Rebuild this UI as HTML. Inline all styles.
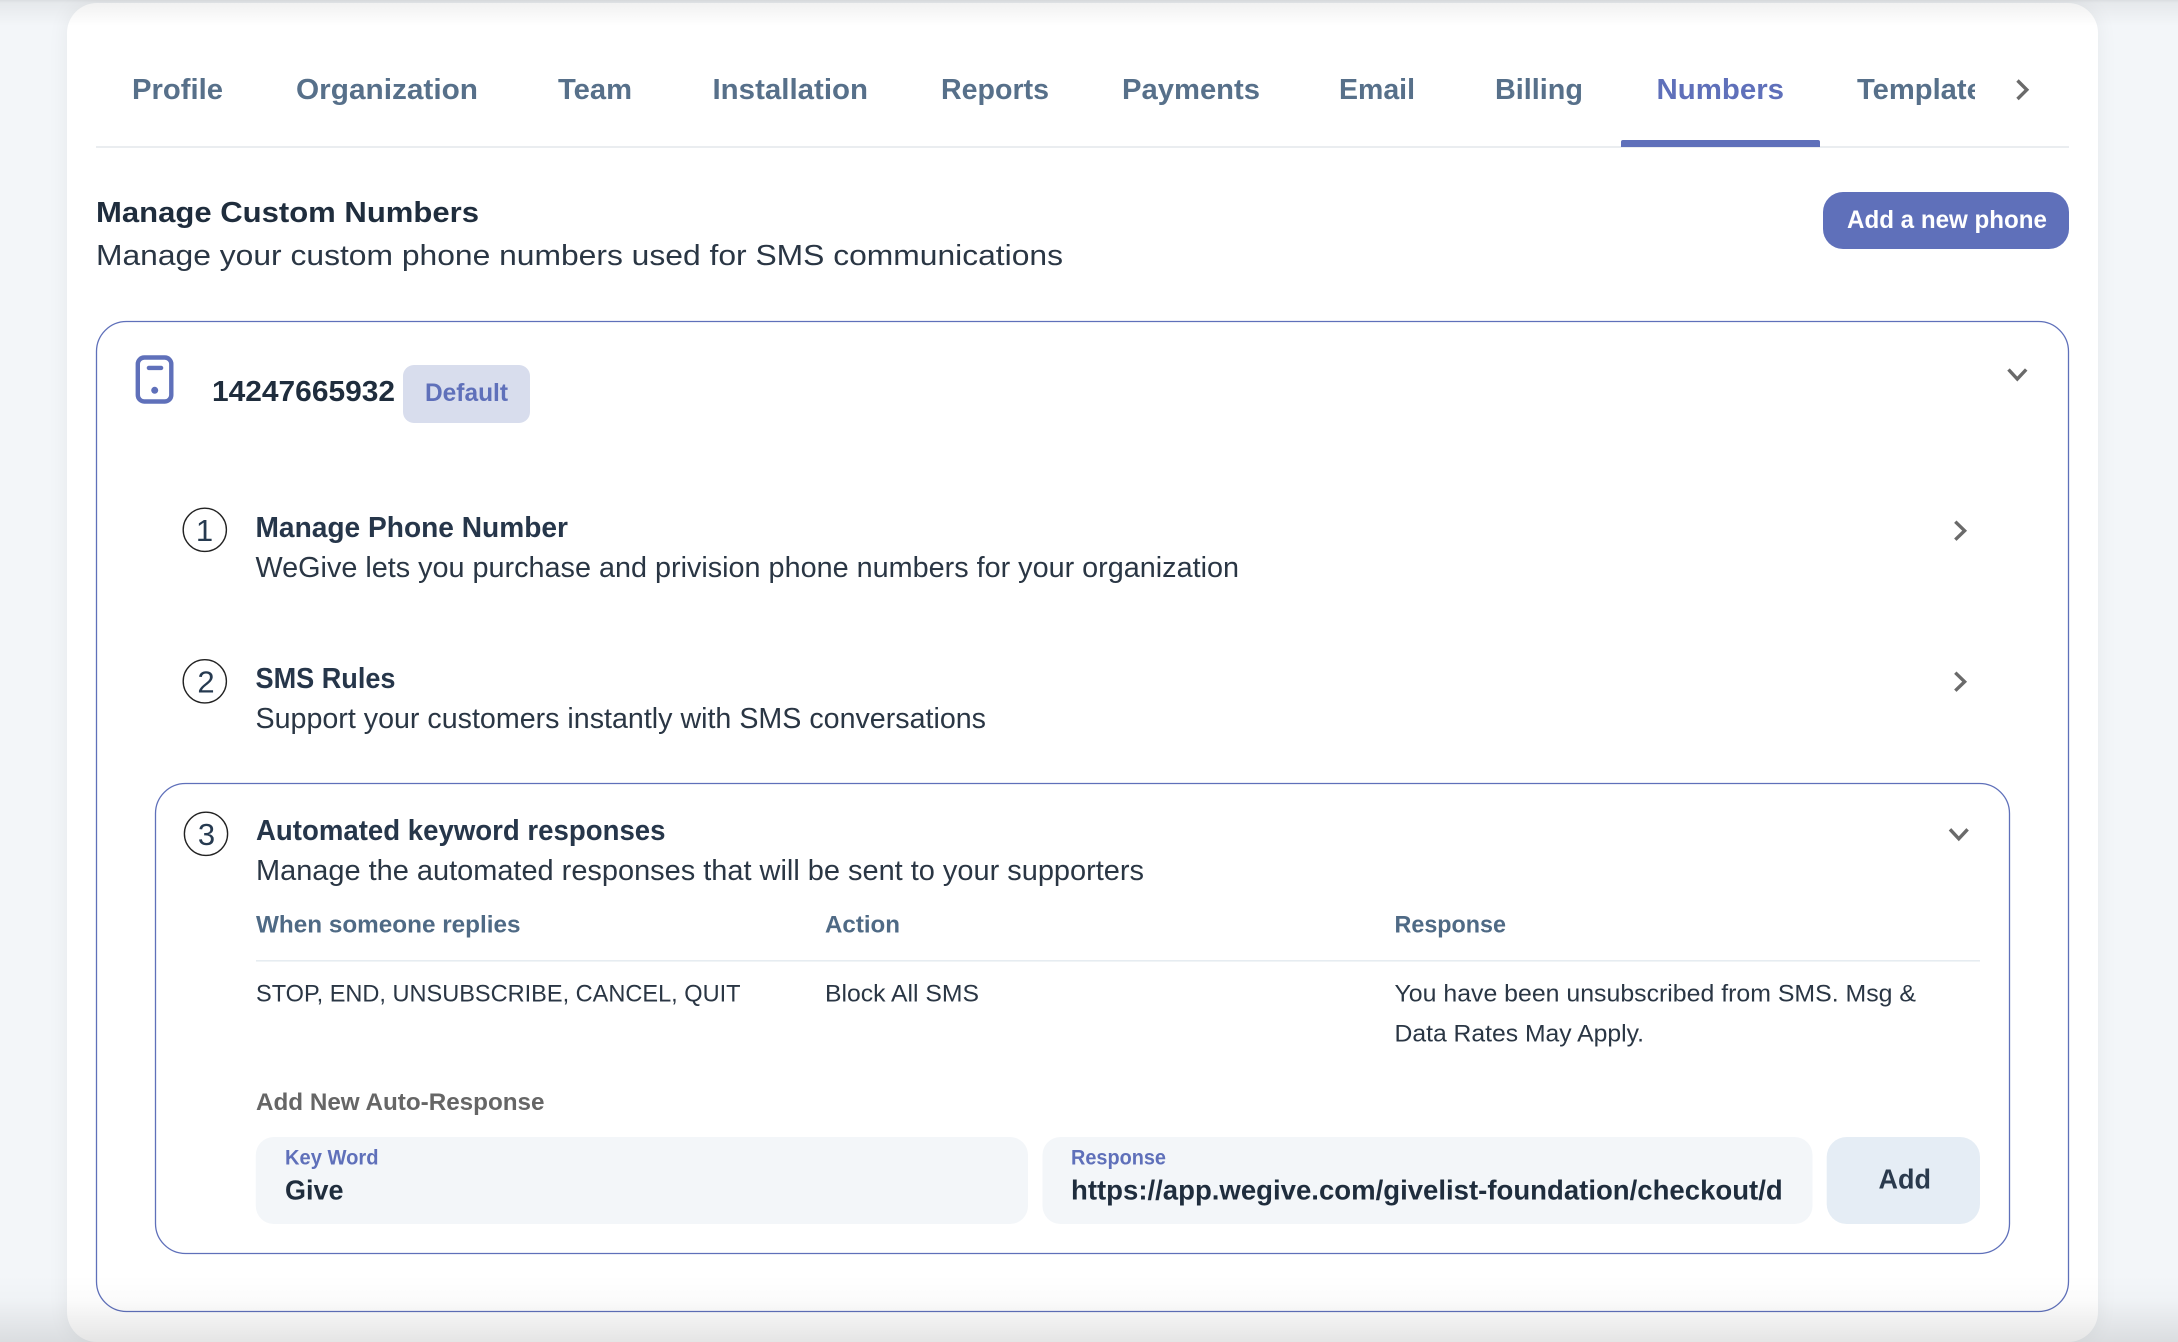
<!DOCTYPE html>
<html lang="en">
<head>
<meta charset="utf-8">
<title>Manage Custom Numbers</title>
<style>
html,body{margin:0;padding:0;width:2178px;height:1342px;overflow:hidden;background:#f3f6f9;}
body{position:relative;font-family:"Liberation Sans",sans-serif;}
.card{position:absolute;left:67px;top:3px;width:2031px;height:1338.5px;background:#fff;border-radius:30px;box-shadow:0 0 22px rgba(0,0,0,.06);}
.ov-top{position:absolute;left:0;top:0;width:2178px;height:26px;background:linear-gradient(to bottom,rgba(0,0,0,.1) 0,rgba(0,0,0,.055) 3px,rgba(0,0,0,0) 26px);}
.ov-bot{position:absolute;left:0;top:1275px;width:2178px;height:67px;background:linear-gradient(to bottom,rgba(0,0,0,0) 0,rgba(0,0,0,.015) 25px,rgba(0,0,0,.1) 100%);}
svg{position:absolute;left:0;top:0;}
text{font-family:"Liberation Sans",sans-serif;}
.tab{font-size:29px;font-weight:700;fill:#57708a;}
.h{font-size:29px;font-weight:700;fill:#1f2d3d;}
.h2{font-size:28.5px;font-weight:700;fill:#26364a;}
.p{font-size:29px;fill:#2a3644;}
.th{font-size:24.5px;font-weight:700;fill:#4f6a85;}
.td{font-size:24.5px;fill:#2a3644;}
.lbl{font-size:21px;font-weight:700;fill:#5f70ba;}
.val{font-size:27.5px;font-weight:700;fill:#1f2d3d;}
.num{font-size:31px;fill:#263a50;}
.chev{fill:none;stroke:#6a6a6a;stroke-width:3.4;stroke-linejoin:miter;}
</style>
</head>
<body>
<div class="card"></div>
<svg width="2178" height="1342" viewBox="0 0 2178 1342" xmlns="http://www.w3.org/2000/svg">
<defs><clipPath id="tabclip"><rect x="1850" y="60" width="125" height="60"/></clipPath></defs>

<!-- tabs -->
<text class="tab" x="132" y="99" textLength="91" lengthAdjust="spacingAndGlyphs">Profile</text>
<text class="tab" x="296" y="99" textLength="182" lengthAdjust="spacingAndGlyphs">Organization</text>
<text class="tab" x="558" y="99" textLength="74" lengthAdjust="spacingAndGlyphs">Team</text>
<text class="tab" x="712.5" y="99" textLength="155.5" lengthAdjust="spacingAndGlyphs">Installation</text>
<text class="tab" x="941" y="99" textLength="108" lengthAdjust="spacingAndGlyphs">Reports</text>
<text class="tab" x="1122" y="99" textLength="138" lengthAdjust="spacingAndGlyphs">Payments</text>
<text class="tab" x="1339" y="99" textLength="76" lengthAdjust="spacingAndGlyphs">Email</text>
<text class="tab" x="1495" y="99" textLength="88" lengthAdjust="spacingAndGlyphs">Billing</text>
<text class="tab" x="1656.5" y="99" textLength="127.5" lengthAdjust="spacingAndGlyphs" style="fill:#5f70ba">Numbers</text>
<g clip-path="url(#tabclip)"><text class="tab" x="1857" y="99" textLength="142" lengthAdjust="spacingAndGlyphs">Templates</text></g>
<path class="chev" d="M2017.5 80.5 L2026.8 89.8 L2017.5 99"/>
<rect x="96" y="146" width="1973" height="2" fill="#eaedf0"/>
<path d="M1621 147 V142 Q1621 140 1623 140 H1818 Q1820 140 1820 142 V147 Z" fill="#5f70ba"/>

<!-- heading -->
<text class="h" x="96" y="222" textLength="383" lengthAdjust="spacingAndGlyphs">Manage Custom Numbers</text>
<text class="p" x="96" y="265" textLength="967" lengthAdjust="spacingAndGlyphs">Manage your custom phone numbers used for SMS communications</text>
<rect x="1823" y="192" width="246" height="57" rx="20" fill="#5f70ba"/>
<text x="1847" y="228" font-size="25" font-weight="700" fill="#fff" textLength="200" lengthAdjust="spacingAndGlyphs">Add a new phone</text>

<!-- outer box -->
<rect x="96.5" y="321.5" width="1972" height="990" rx="30" fill="none" stroke="#5f70ba" stroke-width="1.3"/>
<rect x="137.8" y="357.5" width="33.5" height="44" rx="6.5" fill="none" stroke="#5f70ba" stroke-width="4.4"/>
<rect x="146.7" y="365.7" width="16.6" height="4.4" rx="2.2" fill="#5f70ba"/>
<circle cx="154.7" cy="390.3" r="3.5" fill="#5f70ba"/>
<text class="h" x="212" y="401" textLength="183" lengthAdjust="spacingAndGlyphs">14247665932</text>
<rect x="403" y="365" width="127" height="58" rx="11" fill="#d8dded"/>
<text x="425" y="401" font-size="25" font-weight="700" fill="#5f70ba" textLength="83" lengthAdjust="spacingAndGlyphs">Default</text>
<path class="chev" d="M2008.5 369.5 L2017.3 379 L2026.2 369.5"/>

<!-- item 1 -->
<circle cx="204.8" cy="529.8" r="21.6" fill="none" stroke="#222" stroke-width="1.4"/>
<text class="num" x="204.5" y="541" text-anchor="middle">1</text>
<text class="h2" x="255.5" y="537" textLength="312.5" lengthAdjust="spacingAndGlyphs">Manage Phone Number</text>
<text class="p" x="255.5" y="577" textLength="983.5" lengthAdjust="spacingAndGlyphs">WeGive lets you purchase and privision phone numbers for your organization</text>
<path class="chev" d="M1955.3 521.7 L1964.6 530.7 L1955.3 539.7"/>

<!-- item 2 -->
<circle cx="204.8" cy="681.3" r="21.6" fill="none" stroke="#222" stroke-width="1.4"/>
<text class="num" x="206" y="692.5" text-anchor="middle">2</text>
<text class="h2" x="255.5" y="688" textLength="140" lengthAdjust="spacingAndGlyphs">SMS Rules</text>
<text class="p" x="255.5" y="728" textLength="730.5" lengthAdjust="spacingAndGlyphs">Support your customers instantly with SMS conversations</text>
<path class="chev" d="M1955.3 672.7 L1964.6 681.7 L1955.3 690.7"/>

<!-- item 3 box -->
<rect x="155.5" y="783.5" width="1854" height="470" rx="30" fill="none" stroke="#5f70ba" stroke-width="1.3"/>
<circle cx="206" cy="833.8" r="21.6" fill="none" stroke="#222" stroke-width="1.4"/>
<text class="num" x="206.5" y="845" text-anchor="middle">3</text>
<text class="h2" x="256" y="840" textLength="409.5" lengthAdjust="spacingAndGlyphs">Automated keyword responses</text>
<text class="p" x="256" y="880" textLength="888" lengthAdjust="spacingAndGlyphs">Manage the automated responses that will be sent to your supporters</text>
<path class="chev" d="M1950 829.3 L1958.8 838.8 L1967.6 829.3"/>

<!-- table -->
<text class="th" x="256" y="932.7" textLength="264.5" lengthAdjust="spacingAndGlyphs">When someone replies</text>
<text class="th" x="825" y="932.7" textLength="75" lengthAdjust="spacingAndGlyphs">Action</text>
<text class="th" x="1394.5" y="932.7" textLength="111.5" lengthAdjust="spacingAndGlyphs">Response</text>
<rect x="256" y="960" width="1724" height="1.6" fill="#e6ecf1"/>
<text class="td" x="256" y="1001.7" textLength="484.5" lengthAdjust="spacingAndGlyphs">STOP, END, UNSUBSCRIBE, CANCEL, QUIT</text>
<text class="td" x="825" y="1001.7" textLength="154" lengthAdjust="spacingAndGlyphs">Block All SMS</text>
<text class="td" x="1394.5" y="1001.7" textLength="521.5" lengthAdjust="spacingAndGlyphs">You have been unsubscribed from SMS. Msg &amp;</text>
<text class="td" x="1394.5" y="1041.7" textLength="249.5" lengthAdjust="spacingAndGlyphs">Data Rates May Apply.</text>

<!-- add new -->
<text x="256" y="1110" font-size="24.5" font-weight="700" fill="#666" textLength="288.5" lengthAdjust="spacingAndGlyphs">Add New Auto-Response</text>
<rect x="255.8" y="1137" width="772.2" height="87" rx="18" fill="#f3f6f9"/>
<text class="lbl" x="285" y="1164.7" textLength="93.5" lengthAdjust="spacingAndGlyphs">Key Word</text>
<text class="val" x="285" y="1199.3" textLength="58.5" lengthAdjust="spacingAndGlyphs">Give</text>
<rect x="1042.5" y="1137" width="770" height="87" rx="18" fill="#f3f6f9"/>
<text class="lbl" x="1071" y="1164.7" textLength="95" lengthAdjust="spacingAndGlyphs">Response</text>
<text class="val" x="1071" y="1199.3" textLength="711.7" lengthAdjust="spacingAndGlyphs">https://app.wegive.com/givelist-foundation/checkout/d</text>
<rect x="1826.7" y="1137" width="153.3" height="87" rx="20" fill="#e5edf5"/>
<text x="1878.5" y="1188.7" font-size="27.5" font-weight="700" fill="#2a3a4d" textLength="52.5" lengthAdjust="spacingAndGlyphs">Add</text>
</svg>
<div class="ov-top"></div>
<div class="ov-bot"></div>
</body>
</html>
